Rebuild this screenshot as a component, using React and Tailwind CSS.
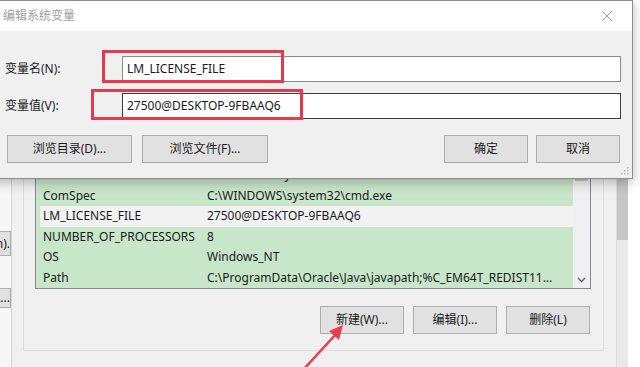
import React from 'react';

const font = "font-['Noto_Sans','Noto_Sans_CJK_SC',sans-serif]";

const rows = [
  { name: 'DriverData', value: 'C:\\Windows\\System32\\Drivers\\DriverData' },
  { name: 'ComSpec', value: 'C:\\WINDOWS\\system32\\cmd.exe' },
  { name: 'LM_LICENSE_FILE', value: '27500@DESKTOP-9FBAAQ6', selected: true },
  { name: 'NUMBER_OF_PROCESSORS', value: '8' },
  { name: 'OS', value: 'Windows_NT' },
  { name: 'Path', value: 'C:\\ProgramData\\Oracle\\Java\\javapath;%C_EM64T_REDIST11...' },
];

const WinButton = ({ children, className = '' }) => (
  <div
    className={`flex items-center justify-center bg-[#e1e1e1] border border-[#adadad] text-[12px] text-[#1a1a1a] ${className}`}
  >
    {children}
  </div>
);

const BackgroundWindow = () => (
  <div className="flex h-full">
    {/* left window strip with clipped buttons */}
    <div className="w-[11px] bg-[#f7f7f7] flex flex-col pt-[231px]">
      <div className="h-[25px] bg-[#e1e1e1] border-y border-r border-[#adadad] flex items-center justify-end overflow-hidden text-[12px] text-[#1a1a1a] whitespace-nowrap">
        n).
      </div>
      <div className="h-[20px] mt-[32px] bg-[#e1e1e1] border-y border-r border-[#adadad] flex items-center justify-end overflow-hidden text-[12px] text-[#1a1a1a] whitespace-nowrap">
        n...
      </div>
    </div>
    <div className="w-px bg-[#d4d4d4]" />
    <div className="w-[11px] bg-[#f0f0f0]" />

    {/* group box */}
    <div className="bg-[#f0f0f0]">
      <div className="w-[581px] h-[351px] border-x border-b border-[#dcdcdc] pl-[11px] pr-[12px] pt-[164px]">
        <div className="w-[556px] border border-[#828790] bg-white flex">
          <div className="flex-1 flex flex-col bg-[#c8e6c9]">
            {rows.map((r) => (
              <div
                key={r.name}
                className={`h-[20.5px] flex items-center text-[12px] text-[#1a1a1a] whitespace-nowrap ${
                  r.selected ? 'bg-[#f2f2f2] ml-[4px] pl-[3px]' : 'pl-[7px]'
                }`}
              >
                <span className="w-[164px]">{r.name}</span>
                <span>{r.value}</span>
              </div>
            ))}
          </div>
          <div className="w-[17px] bg-[#f0f0f0] flex flex-col justify-between items-center">
            <div className="w-[13px] h-[16px] bg-[#c2c2c2]" />
            <svg width="9" height="6" viewBox="0 0 9 6" className="mb-[5px]">
              <path d="M1 1 L4.5 4.5 L8 1" fill="none" stroke="#606060" strokeWidth="1.3" />
            </svg>
          </div>
        </div>
        <div className="flex justify-end gap-[9px] mt-[17px] pr-[1px]">
          <WinButton className="w-[84px] h-[28px]">新建(W)...</WinButton>
          <WinButton className="w-[84px] h-[28px]">编辑(I)...</WinButton>
          <WinButton className="w-[84px] h-[28px]">删除(L)</WinButton>
        </div>
      </div>
    </div>
    <div className="w-[12px] bg-[#f0f0f0]" />
    <div className="w-px bg-[#dadada]" />
    <div className="w-[11px] flex flex-col bg-[#e9e9e9]">
      <div className="h-[240px] bg-[#c6c6c6]" />
    </div>
    <div className="flex-1 bg-white" />
  </div>
);

const Dialog = () => (
  <div className="absolute -left-[10px] top-0 w-[643px] h-[179px] border border-[#8c8c8c] bg-[#f0f0f0] shadow-[0_3px_12px_rgba(0,0,0,0.28)] flex flex-col">
    <div className="h-[30px] bg-white flex items-center justify-between pl-[12px] pr-[19px]">
      <span className="text-[12px] text-[#a0a0a0]">编辑系统变量</span>
      <svg width="12" height="12" viewBox="0 0 12 12">
        <path d="M1 1 L11 11 M11 1 L1 11" stroke="#a0a0a0" strokeWidth="1" />
      </svg>
    </div>
    <div className="flex-1 relative pl-[14px] pr-[11px] pt-[25px] flex flex-col">
      <div className="flex items-center h-[26px]">
        <span className="w-[117px] text-[12px] text-[#1a1a1a]">变量名(N):</span>
        <div className="flex-1 h-[26px] bg-white border border-[#8a8a8a] flex items-center pl-[4px] text-[12px] text-[#1a1a1a]">
          LM_LICENSE_FILE
        </div>
      </div>
      <div className="flex items-center h-[26px] mt-[11px]">
        <span className="w-[117px] text-[12px] text-[#1a1a1a]">变量值(V):</span>
        <div className="flex-1 h-[26px] bg-white border border-[#3c3c3c] flex items-center pl-[4px] text-[12px] text-[#1a1a1a]">
          27500@DESKTOP-9FBAAQ6
        </div>
      </div>
      <div className="flex mt-[16px] pl-[2px] pr-[1px]">
        <WinButton className="w-[125px] h-[28px]">浏览目录(D)...</WinButton>
        <WinButton className="w-[126px] h-[28px] ml-[10px]">浏览文件(F)...</WinButton>
        <div className="flex-1" />
        <WinButton className="w-[84px] h-[28px]">确定</WinButton>
        <WinButton className="w-[84px] h-[28px] ml-[8px]">取消</WinButton>
      </div>
      <svg width="8" height="8" viewBox="0 0 8 8" className="absolute right-[3px] bottom-[3px]">
        <rect x="6" y="0" width="1.5" height="1.5" fill="#b8b8b8" />
        <rect x="3" y="3" width="1.5" height="1.5" fill="#b8b8b8" />
        <rect x="6" y="3" width="1.5" height="1.5" fill="#b8b8b8" />
        <rect x="0" y="6" width="1.5" height="1.5" fill="#b8b8b8" />
        <rect x="3" y="6" width="1.5" height="1.5" fill="#b8b8b8" />
        <rect x="6" y="6" width="1.5" height="1.5" fill="#b8b8b8" />
      </svg>
    </div>
  </div>
);

export default function App() {
  return (
    <div className={`relative w-[640px] h-[367px] overflow-hidden bg-white ${font}`}>
      <BackgroundWindow />
      <Dialog />
      {/* annotation boxes */}
      <div className="absolute left-[102px] top-[50px] w-[182px] h-[33px] border-[3px] border-[#e6394e]" />
      <div className="absolute left-[91px] top-[89px] w-[212px] h-[31px] border-[3px] border-[#e6394e]" />
      <svg className="absolute left-0 top-0" width="640" height="367" viewBox="0 0 640 367">
        <line x1="303" y1="370" x2="337" y2="333" stroke="#ef3b4f" strokeWidth="2.5" />
        <path d="M343 325 L329 331 L339 340 Z" fill="#ef3b4f" />
      </svg>
    </div>
  );
}
